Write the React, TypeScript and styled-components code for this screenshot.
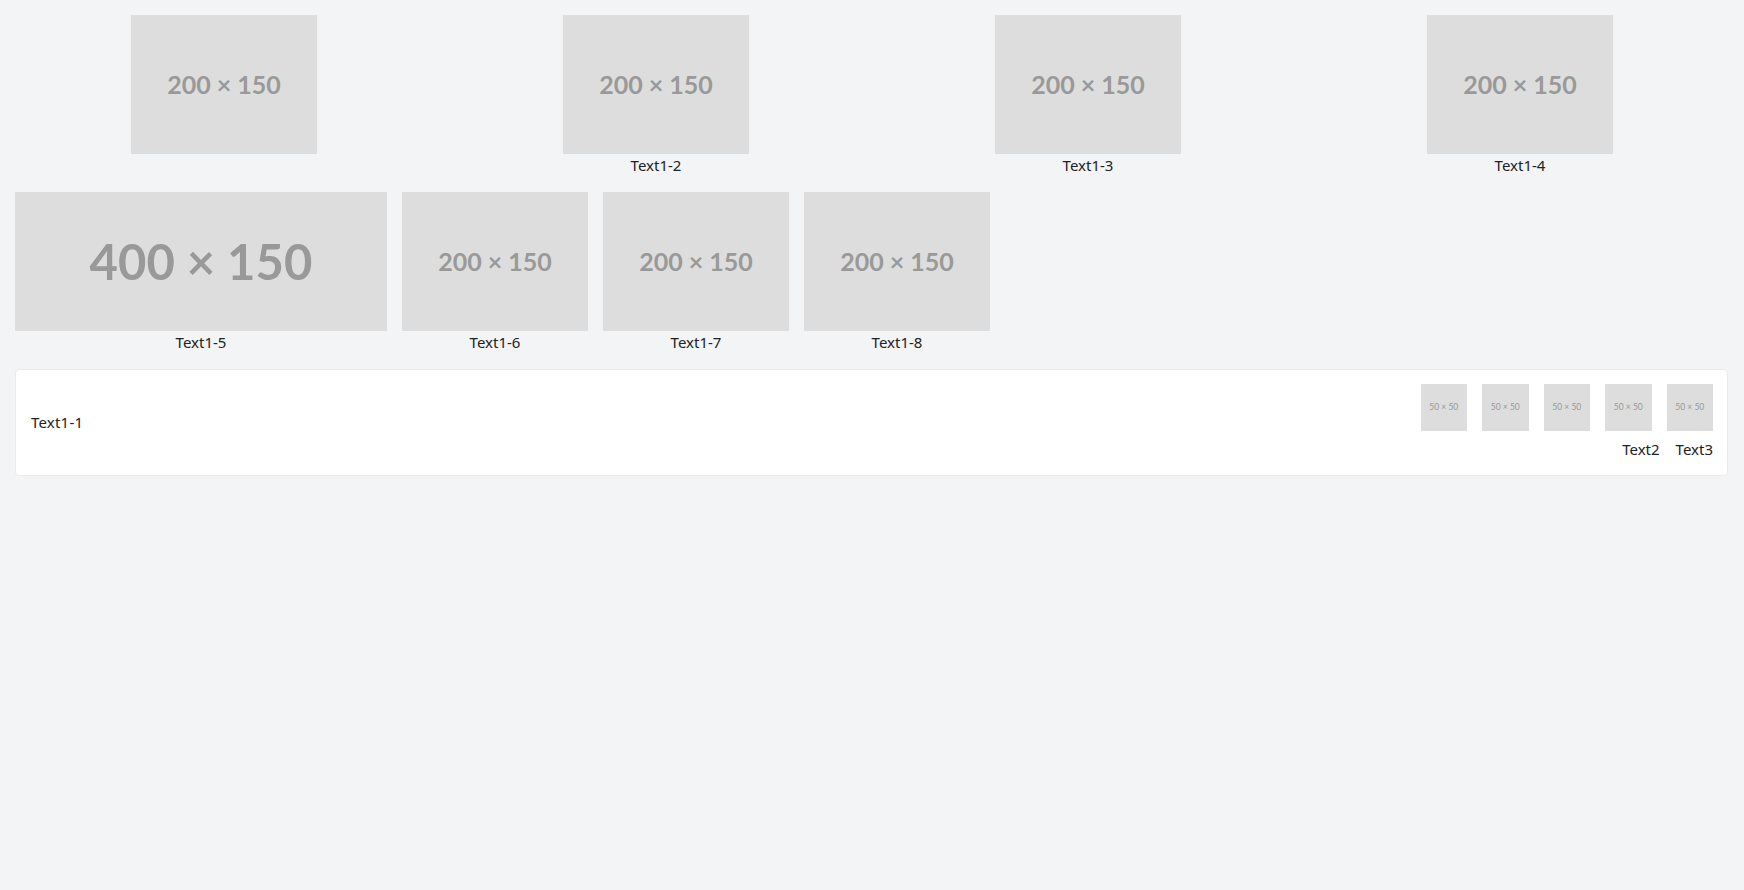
import styled, { createGlobalStyle } from "styled-components";

const GlobalStyle = createGlobalStyle`
  html, body {
    margin: 0;
    padding: 0;
    background: #f3f4f6;
  }
  body {
    font-family: "Noto Sans", "Open Sans", "Noto Sans CJK SC", sans-serif;
    color: #333333;
  }
`;

const Page = styled.div`
  padding: 15px 0;
  display: flex;
  flex-direction: column;
`;

const TopRow = styled.div`
  display: flex;
  justify-content: space-around;
  align-items: flex-start;
  padding: 0 8px;
`;

const SecondRow = styled.div`
  display: flex;
  gap: 15px;
  padding: 0 15px;
  margin-top: 16px;
  align-items: flex-start;
`;

const Tile = styled.div`
  display: flex;
  flex-direction: column;
  align-items: center;
`;

const Caption = styled.div`
  font-size: 15px;
  line-height: 22px;
  color: #222222;
`;

const Placeholder = styled.div<{ $w: number; $h: number; $size: number; $weight?: number }>`
  box-sizing: border-box;
  width: ${(p) => p.$w}px;
  height: ${(p) => p.$h}px;
  padding-bottom: ${(p) => (p.$size > 20 ? 2 : 0)}px;
  flex: none;
  background: #dddddd;
  color: #999999;
  display: flex;
  align-items: center;
  justify-content: center;
  font-family: Lato, "Liberation Sans", sans-serif;
  font-weight: ${(p) => p.$weight ?? 700};
  font-size: ${(p) => p.$size}px;
  white-space: nowrap;
`;

const Panel = styled.div`
  margin: 16px 16px 0 15px;
  background: #ffffff;
  border: 1px solid #ebebeb;
  border-radius: 4px;
  padding: 14px 14px 14px 15px;
  display: flex;
  align-items: center;
  justify-content: space-between;
`;

const PanelLabel = styled.div`
  font-size: 15px;
  line-height: 22px;
  color: #222222;
  letter-spacing: 0.2px;
`;

const ThumbColumn = styled.div`
  display: flex;
  flex-direction: column;
  align-items: flex-end;
  gap: 7px;
`;

const ThumbRow = styled.div`
  display: flex;
  gap: 15px;
`;

const ThumbLabels = styled.div`
  display: flex;
  gap: 16px;
  font-size: 15px;
  line-height: 22px;
  color: #222222;
  margin-bottom: 1px;
`;

const topTiles = [
  { caption: "" },
  { caption: "Text1-2" },
  { caption: "Text1-3" },
  { caption: "Text1-4" },
];

const secondTiles = [
  { w: 372, size: 49, label: "400 × 150", caption: "Text1-5" },
  { w: 186, size: 25, label: "200 × 150", caption: "Text1-6" },
  { w: 186, size: 25, label: "200 × 150", caption: "Text1-7" },
  { w: 186, size: 25, label: "200 × 150", caption: "Text1-8" },
];

export default function App() {
  return (
    <>
      <GlobalStyle />
      <Page>
        <TopRow>
          {topTiles.map((t, i) => (
            <Tile key={i}>
              <Placeholder $w={186} $h={139} $size={25}>
                200 × 150
              </Placeholder>
              {t.caption && <Caption>{t.caption}</Caption>}
            </Tile>
          ))}
        </TopRow>
        <SecondRow>
          {secondTiles.map((t) => (
            <Tile key={t.caption}>
              <Placeholder $w={t.w} $h={139} $size={t.size}>
                {t.label}
              </Placeholder>
              <Caption>{t.caption}</Caption>
            </Tile>
          ))}
        </SecondRow>
        <Panel>
          <PanelLabel>Text1-1</PanelLabel>
          <ThumbColumn>
            <ThumbRow>
              {[0, 1, 2, 3, 4].map((i) => (
                <Placeholder key={i} $w={46.5} $h={46.5} $size={8.5} $weight={400}>
                  50 × 50
                </Placeholder>
              ))}
            </ThumbRow>
            <ThumbLabels>
              <span>Text2</span>
              <span>Text3</span>
            </ThumbLabels>
          </ThumbColumn>
        </Panel>
      </Page>
    </>
  );
}
